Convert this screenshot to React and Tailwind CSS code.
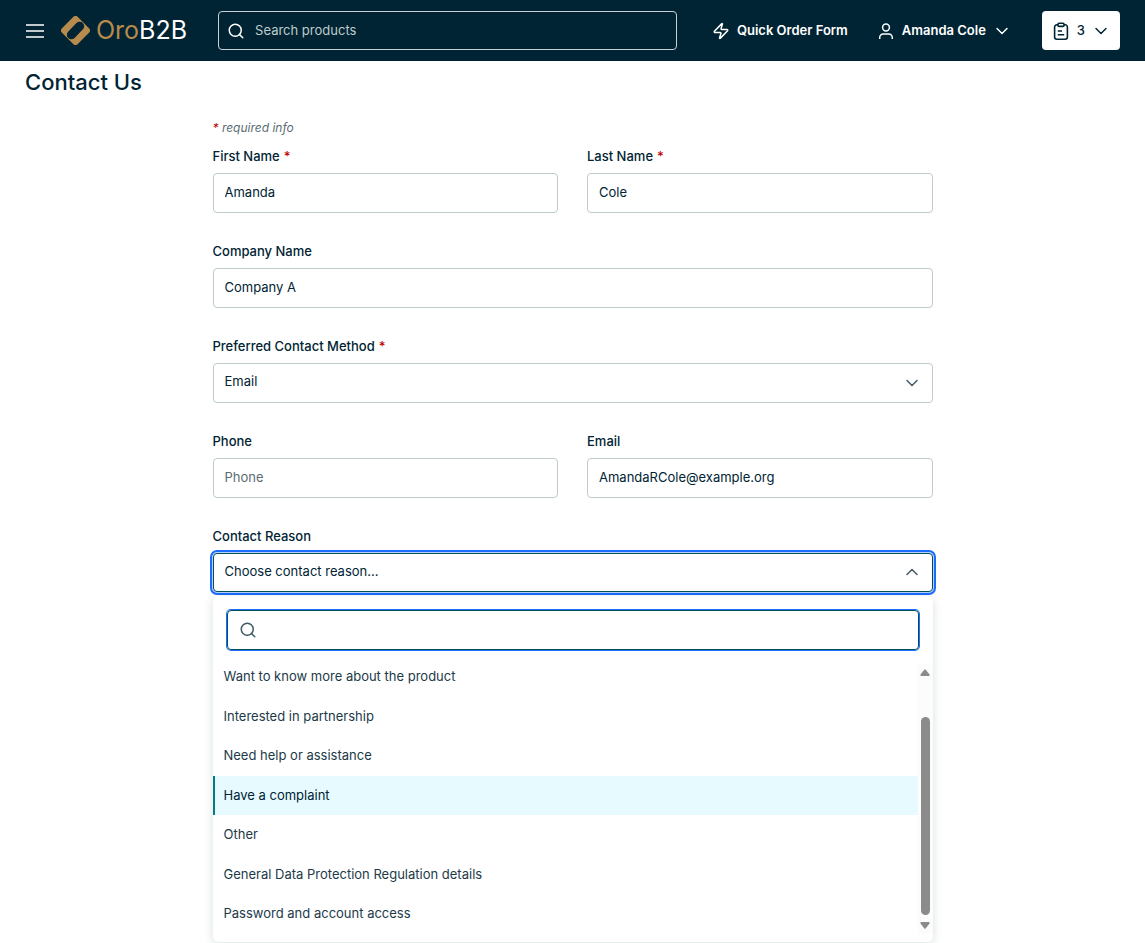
import { useState } from 'react';
import { ChevronDown, ChevronUp, Search, Zap } from 'lucide-react';

const reasons = [
  'Want to know more about the product',
  'Interested in partnership',
  'Need help or assistance',
  'Have a complaint',
  'Other',
  'General Data Protection Regulation details',
  'Password and account access',
];

const inputClasses =
  'h-10 w-full rounded-sm border border-[#bfcccb] bg-white px-[11px] pb-0.5 text-[13px] text-[#002434] outline-none placeholder:text-[#5b6b73]';

function MenuIcon() {
  return (
    <svg width="20" height="20" viewBox="0 0 20 20" stroke="currentColor" strokeWidth="1.7">
      <path d="M1 4h18M1 10h18M1 16h18" />
    </svg>
  );
}

function UserIcon() {
  return (
    <svg width="20" height="20" viewBox="0 0 20 20" fill="none" stroke="currentColor" strokeWidth="1.5">
      <circle cx="10" cy="6.5" r="3.4" />
      <path d="M3.7 18v-1.5a3.6 3.6 0 0 1 3.6-3.600h5.400a3.600 3.600 0 0 1 3.600 3.600V18" />
    </svg>
  );
}

function ClipboardIcon() {
  return (
    <svg
      width="20"
      height="20"
      viewBox="0 0 20 20"
      fill="none"
      stroke="currentColor"
      strokeWidth="1.6"
      strokeLinejoin="round"
    >
      <path d="M7 3.800H5.800a2.200 2.200 0 0 0-2.200 2.200v10a2.200 2.200 0 0 0 2.200 2.200h8.400a2.200 2.200 0 0 0 2.200-2.200V6a2.200 2.200 0 0 0-2.200-2.200H13" />
      <rect x="7" y="2.200" width="6" height="3.200" rx="1" />
      <path d="M6.800 10H11M6.800 13.800h6.400" />
    </svg>
  );
}

function Logo() {
  return (
    <a href="/" className="flex items-center gap-1.5" aria-label="OroB2B">
      <svg width="29" height="29" viewBox="0 0 29 29" fill="none">
        <path
          d="M12.200 1a3.300 3.300 0 0 1 4.600 0L28 12.200a3.300 3.300 0 0 1 0 4.600L16.800 28a3.300 3.300 0 0 1-4.600 0L1 16.800a3.300 3.300 0 0 1 0-4.600Z"
          fill="#b78b4b"
        />
        <rect x="4" y="10" width="21" height="9" rx="4.500" transform="rotate(-46 14.500 14.500)" fill="#002434" />
      </svg>
      <span className="text-[25px] leading-none text-white">
        <span className="text-[#b78b4b]">Oro</span>B2B
      </span>
    </a>
  );
}

function Header() {
  return (
    <header className="flex h-[61px] items-center bg-[#002434] px-[25px] text-[13px] text-white">
      <button type="button" aria-label="Menu" className="mr-4">
        <MenuIcon />
      </button>
      <Logo />
      <label className="ml-[31px] flex h-[39px] max-w-[459px] flex-1 items-center gap-2.5 rounded-sm border border-[#c8d3d6] px-2">
        <Search className="h-[18px] w-[18px] shrink-0" strokeWidth={2} />
        <input
          type="search"
          aria-label="Search products"
          placeholder="Search products"
          className="min-w-0 flex-1 bg-transparent outline-none placeholder:text-[#bfcccb]"
        />
      </label>
      <div className="ml-auto flex items-center">
        <a href="/quick-order" className="flex items-center gap-1.5 font-semibold">
          <Zap className="h-5 w-5 p-px" strokeWidth={2} />
          Quick Order Form
        </a>
        <button type="button" className="ml-7 flex items-center gap-1.5 font-semibold">
          <UserIcon />
          Amanda Cole
          <ChevronDown className="h-5 w-5" strokeWidth={1.75} />
        </button>
        <button
          type="button"
          className="ml-[30px] flex h-[39px] items-center gap-1.5 rounded-sm bg-white px-[9px] font-medium text-[#002434]"
        >
          <ClipboardIcon />
          3
          <ChevronDown className="h-5 w-5" strokeWidth={1.75} />
        </button>
      </div>
    </header>
  );
}

function Field({ id, label, required, children }) {
  return (
    <div className="relative mb-7">
      <label htmlFor={id} className="mb-[7px] block text-[13px] leading-5 font-medium text-[#002434]">
        {label}
        {required && <span className="ml-1 text-[#c10000]">*</span>}
      </label>
      {children}
    </div>
  );
}

function TextField({ id, label, required, ...props }) {
  return (
    <Field id={id} label={label} required={required}>
      <input id={id} required={required} className={inputClasses} {...props} />
    </Field>
  );
}

function ScrollBar() {
  return (
    <div className="flex w-[15px] shrink-0 flex-col items-center bg-[#fcfcfc] py-[5px] text-[#8b8b8b]">
      <svg width="10" height="7" viewBox="0 0 10 7" fill="currentColor">
        <path d="M4.200.8a1 1 0 0 1 1.600 0L9.500 5.600A.9.9 0 0 1 8.800 7H1.200A.9.9 0 0 1 .5 5.600Z" />
      </svg>
      <div className="mt-[41px] w-[9px] flex-1 rounded-full bg-[#8b8b8b]" />
      <svg className="mt-[7px]" width="10" height="7" viewBox="0 0 10 7" fill="currentColor">
        <path d="M4.200 6.200a1 1 0 0 0 1.600 0L9.500 1.400A.9.9 0 0 0 8.800 0H1.200A.9.9 0 0 0 .5 1.400Z" />
      </svg>
    </div>
  );
}

function ReasonMenu({ active, onHover, onSelect }) {
  return (
    <div className="absolute top-full z-10 mt-1 w-full rounded-md bg-white pb-2 shadow-[0_2px_10px_rgba(0,60,60,0.16)]">
      <div className="p-3.5">
        <label className="flex h-10 items-center rounded-sm border border-[#00505c] px-[11px] ring-1 ring-[#1b6cff]">
          <Search className="h-[18px] w-[18px] text-[#405a66]" strokeWidth={2} />
          <input aria-label="Search contact reasons" className="ml-2 flex-1 text-[13px] outline-none" />
        </label>
      </div>
      <div className="flex h-[270px]">
        <div className="flex flex-1 flex-col justify-end overflow-hidden">
          <ul role="listbox" id="reason-list" className="grid h-[277px] shrink-0 auto-rows-fr">
            {reasons.map((reason) => (
              <li
                key={reason}
                role="option"
                aria-selected={reason === active}
                onMouseEnter={() => onHover(reason)}
                onClick={() => onSelect(reason)}
                className={`flex cursor-pointer items-center border-l-2 pl-[9px] text-[13px] ${
                  reason === active
                    ? 'border-[#007c86] bg-[#e6faff] text-[#002434]'
                    : 'border-transparent text-[#1c3a48]'
                }`}
              >
                {reason}
              </li>
            ))}
          </ul>
        </div>
        <ScrollBar />
      </div>
    </div>
  );
}

export default function App() {
  const [open, setOpen] = useState(true);
  const [active, setActive] = useState('Have a complaint');
  const [selected, setSelected] = useState('');

  const selectReason = (reason) => {
    setSelected(reason);
    setOpen(false);
  };

  return (
    <div className="min-h-screen bg-white font-['Inter',sans-serif] text-[#002434]">
      <Header />
      <main className="px-[25px]">
        <h1 className="pt-[5px] text-[22px] leading-8 font-medium">Contact Us</h1>
        <form className="mx-auto mt-5 max-w-[720px]">
          <p className="mb-2 text-xs leading-5 text-[#5b6b73] italic">
            <span className="text-[#c10000]">*</span> required info
          </p>
          <div className="grid grid-cols-2 gap-x-[29px]">
            <TextField id="first-name" label="First Name" required defaultValue="Amanda" />
            <TextField id="last-name" label="Last Name" required defaultValue="Cole" />
          </div>
          <TextField id="company" label="Company Name" defaultValue="Company A" />
          <Field id="method" label="Preferred Contact Method" required>
            <div className="relative">
              <select id="method" className={`${inputClasses} appearance-none`}>
                <option>Email</option>
                <option>Phone</option>
              </select>
              <ChevronDown
                className="pointer-events-none absolute top-2.5 right-[11px] h-5 w-5 text-[#405a66]"
                strokeWidth={1.75}
              />
            </div>
          </Field>
          <div className="grid grid-cols-2 gap-x-[29px]">
            <TextField id="phone" type="tel" label="Phone" placeholder="Phone" />
            <TextField id="email" type="email" label="Email" defaultValue="AmandaRCole@example.org" />
          </div>
          <Field id="reason" label="Contact Reason">
            <button
              type="button"
              id="reason"
              role="combobox"
              aria-haspopup="listbox"
              aria-expanded={open}
              aria-controls="reason-list"
              onClick={() => setOpen(!open)}
              className="flex h-[39px] w-full items-center justify-between rounded-sm border border-[#00505c] bg-white pr-2.5 pb-0.5 pl-[11px] text-[13px] shadow-[0_0_0_1px_#b9d0ff,0_0_0_3px_#1b6cff]"
            >
              {selected || 'Choose contact reason...'}
              <ChevronUp className="h-5 w-5 text-[#405a66]" strokeWidth={1.75} />
            </button>
            {open && <ReasonMenu active={active} onHover={setActive} onSelect={selectReason} />}
          </Field>
        </form>
      </main>
    </div>
  );
}
